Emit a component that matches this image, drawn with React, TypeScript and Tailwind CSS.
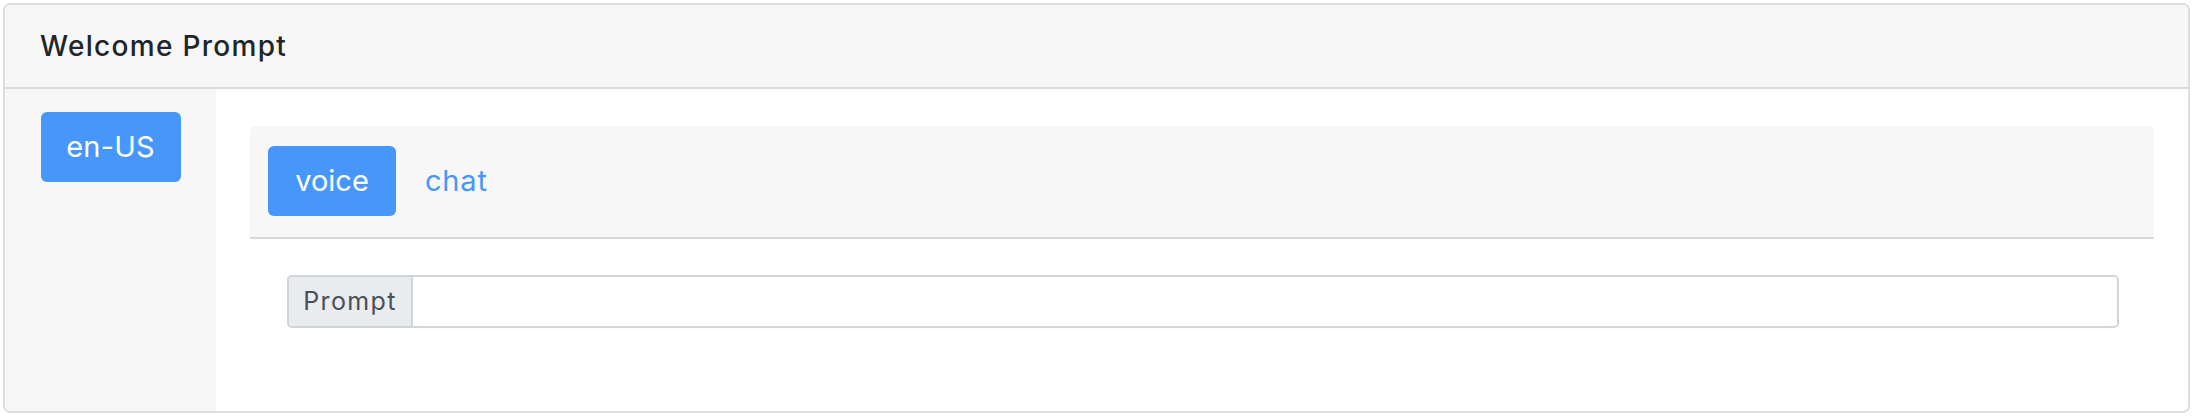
import React from "react";

export default function App() {
  return (
    <div className="w-[2198px] h-[418px] bg-white pl-[3px] pt-[3px]" style={{ fontFamily: "Inter, 'Noto Sans', sans-serif" }}>
      <div className="flex h-[410px] w-[2187px] flex-col overflow-hidden rounded-[7px] border-2 border-[#dedede]">
        <div className="flex h-[84px] shrink-0 items-center border-b-2 border-[#dadada] bg-[#f7f7f7] pl-[35px]">
          <span className="text-[28px] font-medium leading-none tracking-[1.3px] text-[#212529]">Welcome Prompt</span>
        </div>
        <div className="flex flex-1">
          <div className="flex w-[211px] shrink-0 justify-center bg-[#f7f7f7] pt-[23px]">
            <button className="flex h-[70px] w-[140px] items-center justify-center rounded-[6px] bg-[#4697f9] text-[29px] tracking-[0.2px] text-white">
              en-US
            </button>
          </div>
          <div className="flex flex-1 flex-col pl-[34px] pr-[34px] pt-[37px]">
            <div className="flex h-[113px] items-start gap-[29px] rounded-t-[6px] border-b-2 border-[#d9d9d9] bg-[#f7f7f7] pl-[18px] pt-[20px]">
              <button className="flex h-[70px] w-[128px] items-center justify-center rounded-[6px] bg-[#4697f9] text-[29px] text-white">
                voice
              </button>
              <span className="flex h-[70px] items-center text-[29px] tracking-[0.8px] text-[#4697f9]">chat</span>
            </div>
            <div className="ml-[37px] mr-[35px] mt-[36px] flex h-[53px] overflow-hidden rounded-[5px] border-2 border-[#d1d5da]">
              <div className="flex w-[124px] shrink-0 items-center justify-center border-r-2 border-[#d1d5da] bg-[#e9ecef] text-[25px] tracking-[1.4px] text-[#495057]">
                Prompt
              </div>
              <input className="flex-1 bg-white outline-none" />
            </div>
          </div>
        </div>
      </div>
    </div>
  );
}
